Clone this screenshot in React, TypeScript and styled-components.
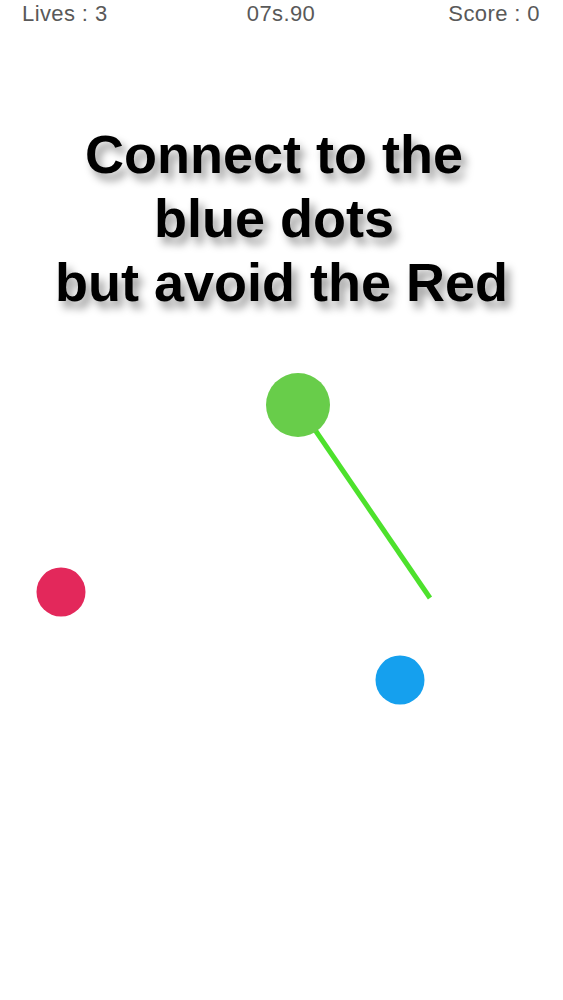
import React, { FC } from "react";
import styled, { createGlobalStyle } from "styled-components";

const GlobalStyle = createGlobalStyle`
  html, body {
    margin: 0;
    padding: 0;
    background: #ffffff;
  }
  body {
    font-family: "Liberation Sans", Arial, Helvetica, sans-serif;
  }
`;

const Screen = styled.div`
  position: relative;
  width: 563px;
  height: 1000px;
  overflow: hidden;
  background: #ffffff;
`;

const StatusBar = styled.div`
  display: grid;
  grid-template-columns: 1fr auto 1fr;
  align-items: center;
  padding: 3px 23px 0 22px;
  font-size: 22px;
  line-height: 22px;
  letter-spacing: 0.4px;
  color: #595959;
`;

const StatusItem = styled.span<{ $align: "left" | "center" | "right" }>`
  text-align: ${(p) => p.$align};
`;

const Title = styled.h1`
  margin: 97px 0 0;
  text-align: center;
  font-size: 54px;
  line-height: 64px;
  font-weight: 700;
  color: #000000;
  white-space: pre;
  text-shadow: 5px 7px 9px rgba(0, 0, 0, 0.4);
`;

const Board = styled.svg`
  position: absolute;
  left: 0;
  top: 0;
  pointer-events: none;
`;

interface Dot {
  x: number;
  y: number;
  r: number;
  color: string;
}

const dots: Dot[] = [
  { x: 298, y: 405, r: 32, color: "#68cd4a" },
  { x: 61, y: 592, r: 24.5, color: "#e3285b" },
  { x: 400, y: 680, r: 24.5, color: "#15a0ee" },
];

// the first two lines keep a trailing space, as the game's label does
const titleLines = ["Connect to the ", "blue dots ", "but avoid the Red"];

const App: FC = () => {
  return (
    <Screen>
      <GlobalStyle />
      <StatusBar>
        <StatusItem $align="left">Lives : 3</StatusItem>
        <StatusItem $align="center">07s.90</StatusItem>
        <StatusItem $align="right">Score : 0</StatusItem>
      </StatusBar>
      <Title>
        {titleLines.map((line, i) => (
          <React.Fragment key={i}>
            {line}
            {i < titleLines.length - 1 && <br />}
          </React.Fragment>
        ))}
      </Title>
      <Board width={563} height={1000} viewBox="0 0 563 1000">
        <line
          x1={298}
          y1={405}
          x2={430}
          y2={598}
          stroke="#4de12c"
          strokeWidth={5}
        />
        {dots.map((d, i) => (
          <circle key={i} cx={d.x} cy={d.y} r={d.r} fill={d.color} />
        ))}
      </Board>
    </Screen>
  );
};

export default App;
